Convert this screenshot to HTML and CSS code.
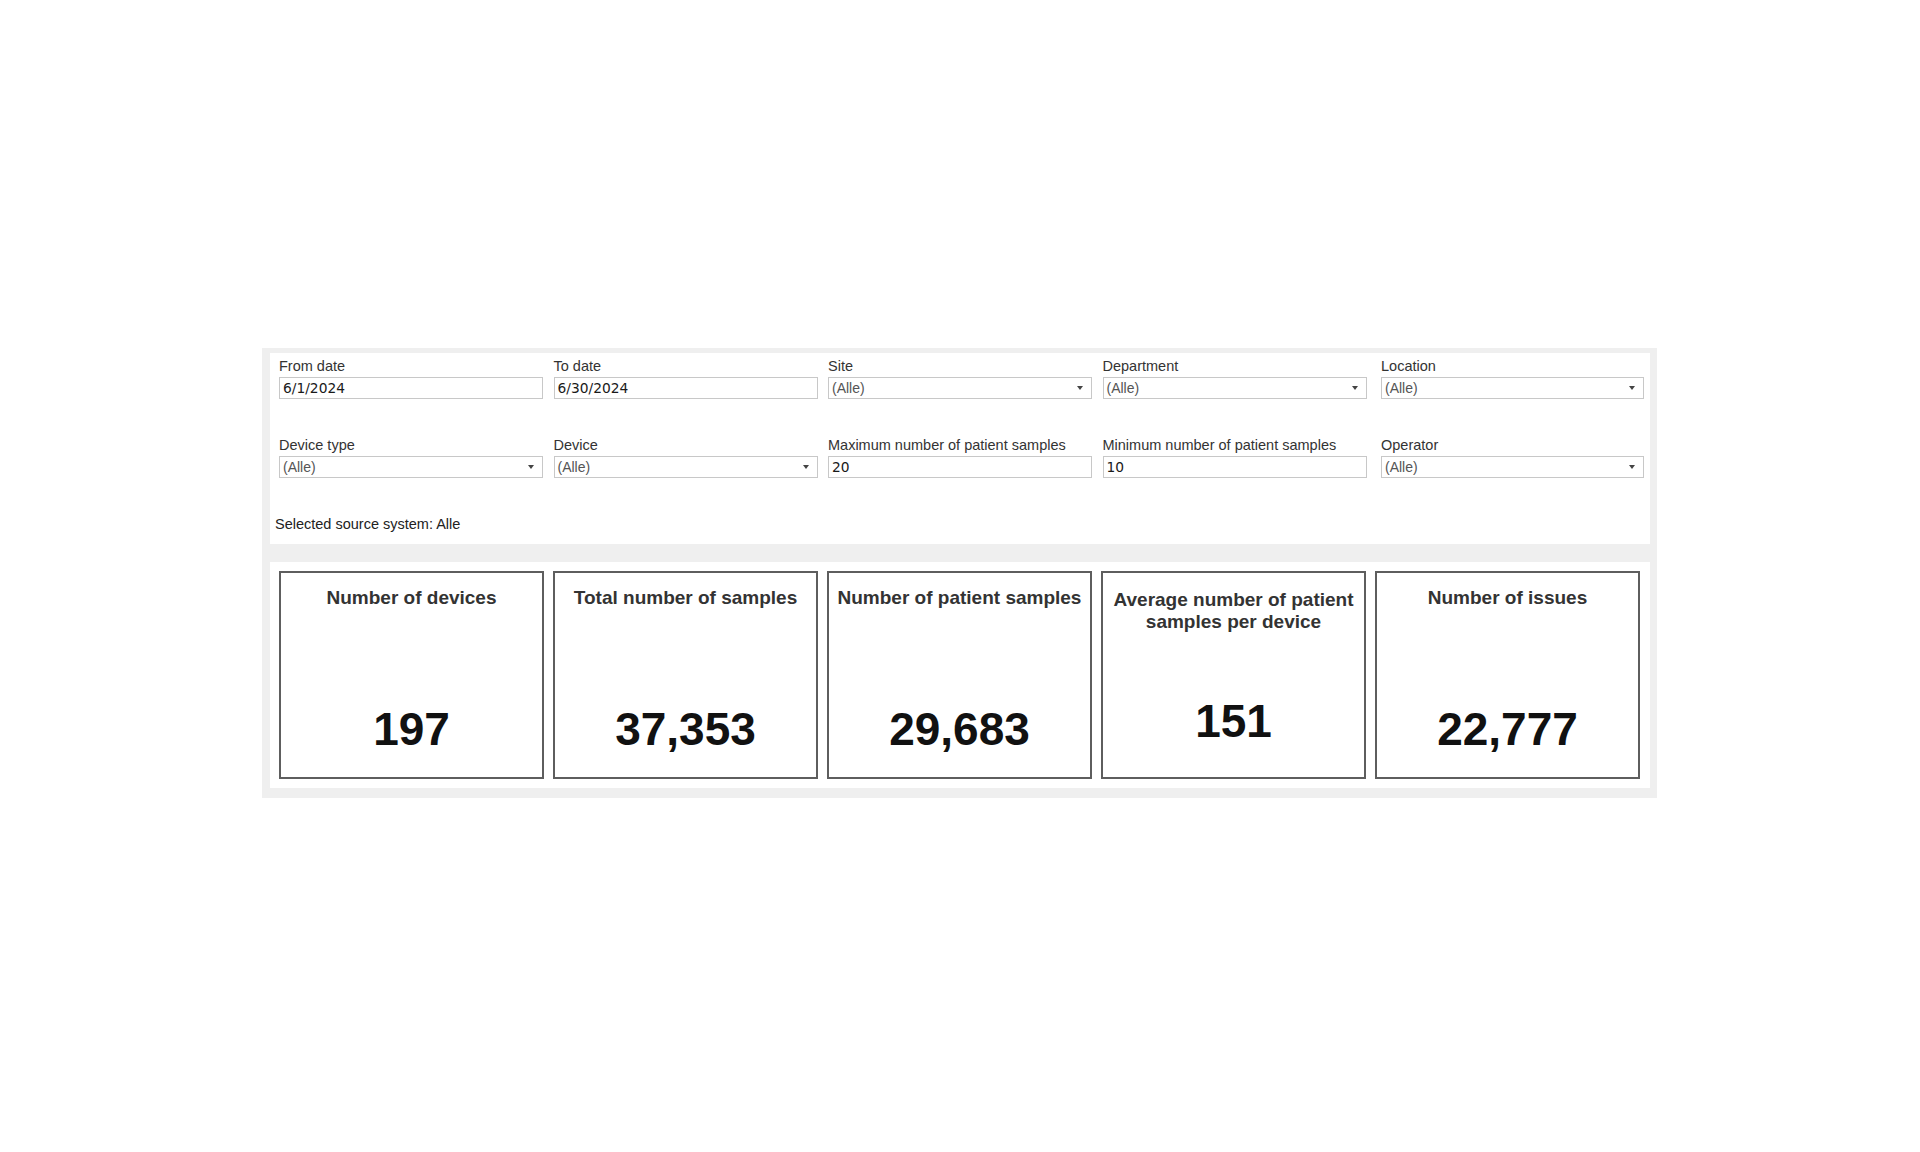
FILE: index.html
```html
<!DOCTYPE html>
<html lang="en">
<head>
<meta charset="utf-8">
<title>Dashboard</title>
<link rel="stylesheet" href="styles.css">
</head>
<body>
<div class="frame">
  <section class="filters">
    <div class="filter-grid">
      <div class="field">
        <div class="label">From date</div>
        <div class="input">6/1/2024</div>
      </div>
      <div class="field">
        <div class="label">To date</div>
        <div class="input">6/30/2024</div>
      </div>
      <div class="field">
        <div class="label">Site</div>
        <div class="input select"><span>(Alle)</span><i class="arrow"></i></div>
      </div>
      <div class="field">
        <div class="label">Department</div>
        <div class="input select"><span>(Alle)</span><i class="arrow"></i></div>
      </div>
      <div class="field field--last">
        <div class="label">Location</div>
        <div class="input select"><span>(Alle)</span><i class="arrow"></i></div>
      </div>
      <div class="field">
        <div class="label">Device type</div>
        <div class="input select"><span>(Alle)</span><i class="arrow"></i></div>
      </div>
      <div class="field">
        <div class="label">Device</div>
        <div class="input select"><span>(Alle)</span><i class="arrow"></i></div>
      </div>
      <div class="field">
        <div class="label">Maximum number of patient samples</div>
        <div class="input">20</div>
      </div>
      <div class="field">
        <div class="label">Minimum number of patient samples</div>
        <div class="input">10</div>
      </div>
      <div class="field field--last">
        <div class="label">Operator</div>
        <div class="input select"><span>(Alle)</span><i class="arrow"></i></div>
      </div>
    </div>
    <div class="source">Selected source system: Alle</div>
  </section>
  <section class="cards">
    <div class="card">
      <div class="card-title">Number of devices</div>
      <div class="card-value">197</div>
    </div>
    <div class="card">
      <div class="card-title">Total number of samples</div>
      <div class="card-value">37,353</div>
    </div>
    <div class="card">
      <div class="card-title">Number of patient samples</div>
      <div class="card-value">29,683</div>
    </div>
    <div class="card card--wrap">
      <div class="card-title">Average number of patient samples per device</div>
      <div class="card-value">151</div>
    </div>
    <div class="card">
      <div class="card-title">Number of issues</div>
      <div class="card-value">22,777</div>
    </div>
  </section>
</div>
</body>
</html>
```

FILE: styles.css
```css
html, body {
  margin: 0;
  padding: 0;
  background: #ffffff;
}

body {
  font-family: "Liberation Sans", Arial, sans-serif;
  color: #222222;
}

.frame {
  box-sizing: border-box;
  width: 1395px;
  margin: 348px 0 0 262px;
  padding: 5px 7px 10px 8px;
  background: #efefef;
  display: flex;
  flex-direction: column;
  gap: 18px;
}

/* ---------- filters ---------- */
.filters {
  box-sizing: border-box;
  height: 191px;
  background: #ffffff;
  padding-top: 5px;
}

.filter-grid {
  display: grid;
  grid-template-columns: repeat(4, 264px) 1fr;
  column-gap: 10.5px;
  row-gap: 37.5px;
  padding: 0 6px 0 9px;
}

.field--last {
  padding-left: 4px;
}

.label {
  font-size: 14.5px;
  line-height: 17px;
  color: #333333;
  margin-bottom: 2px;
  white-space: nowrap;
}

.input {
  box-sizing: border-box;
  height: 22px;
  border: 1px solid #c8c8c8;
  padding: 0 3px;
  font-family: "DejaVu Sans", Verdana, sans-serif;
  font-size: 13.8px;
  line-height: 20px;
  color: #1a1a1a;
  background: #ffffff;
}

.select {
  display: flex;
  align-items: center;
  justify-content: space-between;
  font-family: "Liberation Sans", Arial, sans-serif;
  font-size: 14px;
  color: #555555;
  padding-right: 8px;
}

.arrow {
  display: block;
  width: 0;
  height: 0;
  border-left: 3px solid transparent;
  border-right: 3px solid transparent;
  border-top: 4px solid #444444;
}

.source {
  margin-top: 38px;
  padding-left: 5px;
  font-size: 14.5px;
  line-height: 17px;
  color: #222222;
}

/* ---------- KPI cards ---------- */
.cards {
  background: #ffffff;
  padding: 9px 10px 9px 9px;
  display: grid;
  grid-template-columns: repeat(5, 1fr);
  gap: 9px;
}

.card {
  box-sizing: border-box;
  height: 208px;
  border: 2px solid #5e5e5e;
  padding: 14px 4px 22px;
  display: flex;
  flex-direction: column;
  text-align: center;
}

.card--wrap {
  padding-top: 16px;
  padding-bottom: 30px;
}

.card-title {
  font-size: 19px;
  font-weight: bold;
  line-height: 22px;
  color: #333333;
}

.card-value {
  margin-top: auto;
  font-size: 46px;
  font-weight: bold;
  line-height: 52px;
  color: #111111;
}
```
